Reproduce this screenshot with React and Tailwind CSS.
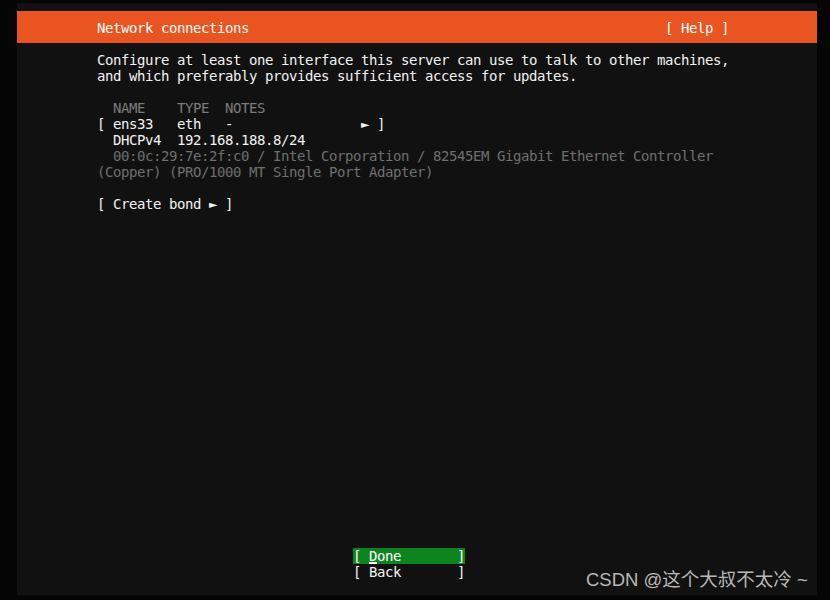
import React from 'react';

const mono = { fontFamily: '"DejaVu Sans Mono", "Liberation Mono", monospace' };

function Line({ children, className = '' }) {
  return <div className={`h-[16px] leading-[16px] whitespace-pre ${className}`}>{children}</div>;
}

export default function App() {
  return (
    <div className="relative w-[830px] h-[600px] bg-[#050505] pt-[3px] pl-[17px] overflow-hidden">
      <div
        className="w-[800px] h-[592px] bg-[#111111] flex flex-col text-[14px] tracking-[-0.43px] text-[#f2f2f2]"
        style={mono}
      >
        {/* header bar */}
        <div className="mt-[8px] h-[32px] bg-[#e95420] flex items-center pt-[2px]">
          <div className="ml-[80px] w-[640px] pr-[8px] flex justify-between text-white">
            <Line>Network connections</Line>
            <Line>[ Help ]</Line>
          </div>
        </div>

        {/* body */}
        <div className="ml-[80px] w-[640px] mt-[9px]">
          <Line>Configure at least one interface this server can use to talk to other machines,</Line>
          <Line>and which preferably provides sufficient access for updates.</Line>
          <Line> </Line>
          <Line className="text-[#7c7c7c]">  NAME    TYPE  NOTES</Line>
          <Line>[ ens33   eth   -                ► ]</Line>
          <Line>  DHCPv4  192.168.188.8/24</Line>
          <Line className="text-[#6f6f6f]">  00:0c:29:7e:2f:c0 / Intel Corporation / 82545EM Gigabit Ethernet Controller</Line>
          <Line className="text-[#6f6f6f]">(Copper) (PRO/1000 MT Single Port Adapter)</Line>
          <Line> </Line>
          <Line>[ Create bond ► ]</Line>
        </div>

        {/* buttons */}
        <div className="mt-auto mb-[15px] ml-[336px] w-[112px]">
          <div className="bg-[#0e8420] text-white">
            <Line>
              {'[ '}
              <span className="relative inline-block h-[16px] align-top">
                D
                <span className="absolute left-0 bottom-0 w-[8px] h-[2px] bg-white" />
              </span>
              {'one       ]'}
            </Line>
          </div>
          <Line>[ Back       ]</Line>
        </div>
      </div>

      {/* watermark */}
      <div
        className="absolute left-[586px] top-[568px] text-[18.5px] leading-[24px] text-[#b8b8b8] whitespace-pre"
        style={{ fontFamily: '"Liberation Sans", "Noto Sans CJK SC", sans-serif' }}
      >
        CSDN @这个大叔不太冷 ~
      </div>
    </div>
  );
}
